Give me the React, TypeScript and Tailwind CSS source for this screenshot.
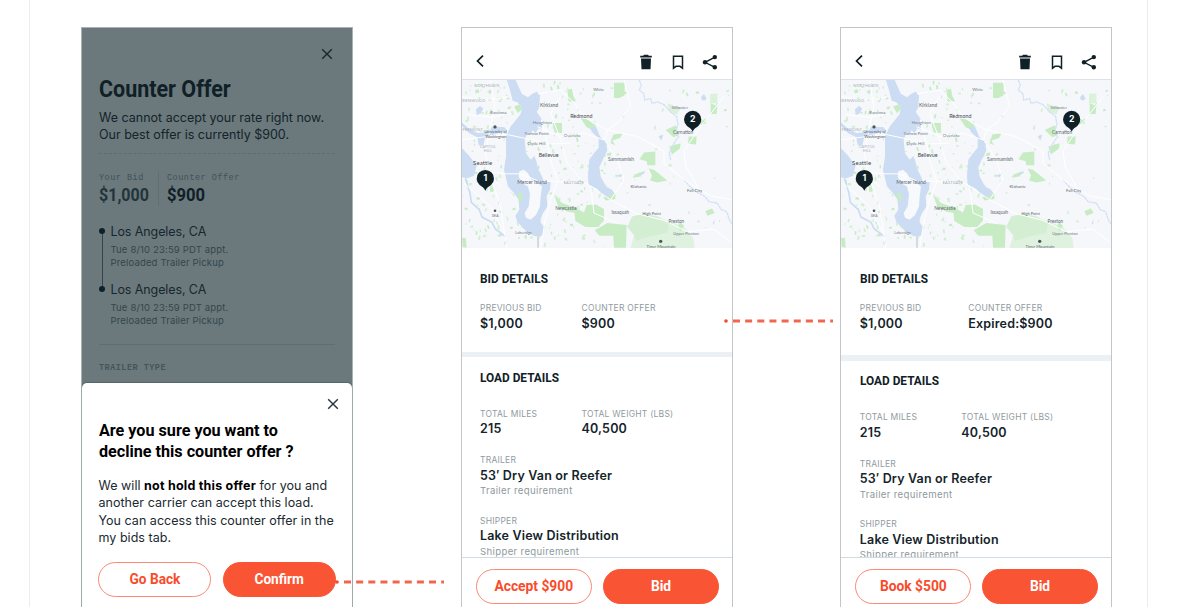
import type { ReactNode } from "react";
import clsx from "clsx";

const INTER = "font-['Inter',sans-serif]";
const MONO = "font-['Liberation_Mono',monospace]";

/* Condensed display face, used for headings and buttons */
function Condensed({
  children,
  className,
}: {
  children: ReactNode;
  className?: string;
}) {
  return (
    <span
      className={clsx(
        "inline-block whitespace-nowrap font-['Roboto',sans-serif] font-bold",
        className,
      )}
    >
      {children}
    </span>
  );
}

function CloseIcon({ className }: { className?: string }) {
  return (
    <svg viewBox="0 0 10 10" className={clsx("size-[10px] overflow-visible", className)}>
      <path d="M0.2 0.2 9.8 9.8M9.8 0.2 0.2 9.8" stroke="currentColor" strokeWidth="1.4" fill="none" />
    </svg>
  );
}

function PillButton({
  children,
  filled,
  className,
}: {
  children: ReactNode;
  filled?: boolean;
  className?: string;
}) {
  return (
    <button
      className={clsx(
        "flex h-[35px] shrink-0 items-center justify-center rounded-full border text-[15px] leading-none",
        filled
          ? "border-[#f95434] bg-[#f95434] text-white"
          : "border-[#fa8a75] bg-white text-[#f94b2b]",
        className,
      )}
    >
      {children}
    </button>
  );
}

const MAP_LABELS: [string, number, number, number, string][] = [
  ["NORTHGATE", 109, 200, 12, "#a9b0b8"],
  ["GREENWOOD", 62, 247, 12, "#a9b0b8"],
  ["FREMONT", 66, 333, 12, "#a9b0b8"],
  ["CAPITOL", 112, 384, 11, "#a9b0b8"],
  ["HILL", 112, 397, 11, "#a9b0b8"],
  ["Ravenna", 143, 281, 13, "#707a82"],
  ["University of", 135, 340, 12, "#4d565e"],
  ["Washington", 135, 354, 12, "#4d565e"],
  ["Kirkland", 295, 260, 15, "#5d666e"],
  ["Houghton", 275, 313, 13, "#7d868e"],
  ["Yarrow Point", 258, 344, 13, "#707a82"],
  ["Clyde Hill", 257, 375, 13, "#707a82"],
  ["Overlake", 365, 350, 13, "#7d868e"],
  ["White", 444, 212, 12, "#707a82"],
  ["Redmond", 392, 295, 16, "#3f484f"],
  ["Bellevue", 294, 413, 16, "#3f484f"],
  ["Mercer Island", 244, 493, 15, "#5d666e"],
  ["EASTGATE", 370, 493, 12, "#a0a8b0"],
  ["Newcastle", 346, 572, 14, "#5d666e"],
  ["Sammamish", 511, 425, 15, "#5d666e"],
  ["Klahanie", 564, 504, 13, "#5d666e"],
  ["Issaquah", 509, 582, 14, "#5d666e"],
  ["High Point", 603, 586, 12, "#5d666e"],
  ["Preston", 677, 611, 14, "#5d666e"],
  ["Upper Preston", 706, 647, 12, "#707a82"],
  ["Tiger Mountain", 631, 686, 13, "#5d666e"],
  ["Stillwater", 687, 266, 12, "#707a82"],
  ["Carnation", 697, 342, 14, "#5d666e"],
  ["Fall City", 732, 517, 13, "#5d666e"],
  ["Lakeridge", 219, 642, 12, "#707a82"],
  ["SEA", 134, 592, 10, "#5d666e"],
];

const PARKS = [
  "490,188 522,188 522,226 506,234 490,234",
  "350,209 364,206 368,228 376,244 354,245",
  "306,309 334,309 334,339 312,338",
  "390,296 412,298 436,318 422,328 408,322",
  "190,260 206,254 216,264 202,280",
  "580,398 614,395 614,436 590,436 588,424 566,418",
  "594,446 610,450 650,482 620,488 598,482 604,468",
  "370,562 400,578 408,556 436,554 460,568 460,602 442,622 404,622 374,604",
  "310,524 334,550 380,566 376,580 350,576 322,558",
  "432,632 470,610 528,616 526,684 490,684 488,648 446,648",
  "476,516 494,520 494,538 466,542 458,534",
  "645,330 676,316 684,346 668,352",
  "714,350 738,350 736,374 712,372",
  "656,380 690,370 688,386 664,404",
  "488,344 516,340 508,354 484,362 494,376 480,370",
  "780,250 800,258 798,282 780,282",
  "750,304 768,294 764,312 748,314",
  "764,574 784,566 792,580 770,588",
  "552,464 578,454 570,470 546,474",
  "688,606 700,618 690,636 682,620",
  "34,654 46,656 48,684 36,682",
  "118,500 128,500 128,516 118,516",
  "74,210 84,208 86,218 74,220",
  "470,400 482,398 480,408 468,408",
];

const ROADS = [
  "M120 180 132 260 120 320 104 400 118 470 150 560 168 684",
  "M34 360 110 350 170 344 226 356 300 372 360 370",
  "M76 452 162 462 208 462 270 486 310 484 406 490 480 540 560 582 640 602 710 636 790 628 844 670",
  "M272 300 290 370 302 430 322 484 300 540 284 600 270 684",
  "M330 230 300 280 330 360 350 430 400 490",
  "M262 222 330 210 372 250 400 292 470 330 560 350 640 394",
  "M470 330 462 360 500 420 520 480 480 540",
  "M640 394 640 430 700 480 780 528 844 540",
  "M520 180 540 260 500 310 470 330",
  "M260 320 330 350 400 340 460 360",
  "M34 230 90 240 170 232M50 284 120 292 176 282",
  "M700 392 706 440 740 500",
  "M820 230 750 320 700 392",
  "M420 500 430 580 500 610",
  "M84 440 150 500M40 490 120 560 160 640",
];

const scatter = (n: number) => {
  const v = Math.sin(n * 127.1 + 11.7) * 43758.5453;
  return v - Math.floor(v);
};

// small parks and yards, denser in the city half
const SPECKS = Array.from({ length: 340 }, (_, i) => {
  const tall = scatter(i + 900) > 0.5;
  const size = 3 + scatter(i + 1700) * 7;
  return {
    x: 36 + scatter(i) * (i % 4 === 0 ? 800 : 430),
    y: 182 + scatter(i + 400) * 498,
    w: tall ? size * 0.6 : size,
    h: tall ? size * 1.3 : size * 0.7,
    r: scatter(i + 2500) * 50 - 25,
  };
});

function RouteMap() {
  return (
    <svg
      viewBox="34 180 810 505"
      preserveAspectRatio="none"
      className="block h-[168px] w-full shrink-0"
      fontFamily="Lato, sans-serif"
    >
      <rect x="34" y="178" width="810" height="507" fill="#f5f7fb" />
      {SPECKS.map((s, i) => (
        <rect
          key={i}
          x={s.x}
          y={s.y}
          width={s.w}
          height={s.h}
          fill={i % 3 ? "#d3efd1" : "#c8ebc6"}
          transform={`rotate(${s.r} ${s.x} ${s.y})`}
        />
      ))}
      <path
        d="M545 590 580 582 620 590 660 606 700 622 728 656 732 685 540 685 550 646 530 622Z"
        fill="#dff1df"
      />
      <path d="M545 590 580 582 620 590 654 612 650 640 600 650 556 664 550 646 530 622Z" fill="#d4eed4" />
      <path d="M778 222 800 220 800 250 778 250Z M650 250 690 264 680 284 656 276Z" fill="#dcf1dc" />
      {PARKS.map((p) => (
        <polygon key={p} points={p} fill="#c7ecc4" />
      ))}

      {/* Water */}
      <g fill="#cbdcf3">
        <path d="M168 178H194L204 200 214 222 232 232 244 222 258 215 268 226 266 262 258 276 272 296 274 330 264 324 254 340 246 330 240 344 232 336 226 348 222 362 226 400 240 420 250 410 256 420 262 446 274 470 280 486 300 486 298 510 288 530 290 560 276 582 268 604 280 624 276 648 252 650 226 634 200 606 194 588 206 570 204 540 190 520 172 500 160 450 166 410 166 350 180 320 196 300 210 282 214 262 200 247 186 242 178 210Z" />
        <path d="M418 324 436 320 448 350 466 368 470 392 456 420 446 442 450 470 466 500 484 510 490 520 470 532 456 526 440 508 414 494 412 470 416 420 430 400 444 384 444 356 424 336Z" />
        <path d="M34 385 54 406 78 436 70 468 50 475 34 472Z" />
        <path d="M76 268 88 258 98 266 90 280 78 286Z" />
        <path d="M34 308 54 326 82 340 104 336 126 320 162 322 168 332 130 344 104 350 98 376 84 376 80 352 56 340 34 318Z" />
        <path d="M752 230 760 222 768 236 760 242 752 238Z M624 350 638 344 632 362Z M562 468 584 452 580 462Z M498 468 518 460 510 472Z M786 610 792 600 790 616Z" />
      </g>
      <path
        d="M44 475 58 520 62 548 86 570 94 592 124 608 134 628 164 650"
        fill="none"
        stroke="#cbdcf3"
        strokeWidth="5"
      />
      <path
        d="M566 180 572 196 566 210 580 222 582 240 600 236 604 250 620 246 640 254 660 276 678 290 682 314 676 330 684 350 668 372 656 400 660 420M700 480 714 496 730 512 762 530 776 546 800 550 812 570 828 576 836 600 844 612"
        fill="none"
        stroke="#d3e0f4"
        strokeWidth="4"
        strokeDasharray="9 1.5"
      />
      <path
        d="M206 454 220 450 232 460 242 478 262 490 274 500 270 530 268 560 256 586 240 600 226 594 222 580 234 560 238 524 232 500 214 490 204 470Z"
        fill="#f7f9fc"
      />
      <path d="M202 518 214 520 216 540 204 548Z" fill="#c7ecc4" />

      {ROADS.map((d) => (
        <path key={d} d={d} fill="none" stroke="#ffffff" strokeWidth="3" />
      ))}
      <path d="M262 648V684" stroke="#d5dae2" strokeWidth="6" />

      {/* Place names */}
      {MAP_LABELS.map(([name, x, y, size, fill]) => (
        <text
          key={name}
          x={x}
          y={y}
          fontSize={size}
          fill={fill}
          textAnchor="middle"
          letterSpacing={name === name.toUpperCase() ? 0.5 : 0}
        >
          {name}
        </text>
      ))}
      <text x="96" y="436" fontSize="18" fill="#3f484f" textAnchor="middle" letterSpacing=".4">
        Seattle
      </text>
      <circle cx="133" cy="321" r="5" fill="#4d565e" />
      <circle cx="133" cy="573" r="4" fill="#4d565e" />
      <circle cx="630" cy="665" r="5" fill="#4d565e" />

      {/* Stops */}
      {[
        { n: "1", x: 104, y: 476 },
        { n: "2", x: 726, y: 298 },
      ].map(({ n, x, y }) => (
        <g key={n} transform={`translate(${x} ${y})`}>
          <path
            d="M0 37C-4 28-10 25-17 20A26 26 0 1 1 17 20C10 25 4 28 0 37Z"
            fill="#0f2026"
          />
          <text y="9" fontSize="26" fontWeight="700" fill="#fff" textAnchor="middle" fontFamily="Inter, sans-serif">
            {n}
          </text>
        </g>
      ))}
    </svg>
  );
}

function Toolbar() {
  return (
    <div className="flex h-[52px] shrink-0 items-start border-b border-[#dde2ea] pr-[15.5px] pl-[14px] text-[#0f2026]">
      <svg viewBox="0 0 8 12" className="mt-[26.5px] h-3 w-2" fill="none" stroke="currentColor" strokeWidth="1.7">
        <path d="M7 0.7 1.5 6 7 11.3" />
      </svg>
      <div className="ml-auto flex gap-[18px] pt-[25.5px]">
        <svg viewBox="0 0 14 16" className="h-4 w-[14px]" fill="currentColor">
          <path d="M1.2 1.8H4.2L5 .7H9L9.8 1.8H12.8V3.5H1.2ZM2 4.4H12L11.5 15.2H2.5Z" />
        </svg>
        <svg viewBox="0 0 14 16" className="h-4 w-[14px]" fill="none" stroke="currentColor" strokeWidth="1.5">
          <path d="M2.5 2.2H11.5V14.2L9 12.3H5L2.5 14.2Z" />
        </svg>
        <svg viewBox="0 0 14 16" className="h-4 w-[14px] overflow-visible" fill="currentColor">
          <path d="M12 3.2 2 8.3 12 13.4" fill="none" stroke="currentColor" strokeWidth="1.3" />
          <circle cx="11.8" cy="3.1" r="2.2" />
          <circle cx="2" cy="8.3" r="2.2" />
          <circle cx="11.8" cy="13.3" r="2.2" />
        </svg>
      </div>
    </div>
  );
}

function Field({
  label,
  value,
  note,
  className,
}: {
  label: string;
  value: string;
  note?: string;
  className?: string;
}) {
  return (
    <div className={clsx("whitespace-nowrap", className)}>
      <div className="text-[8.5px] leading-3 tracking-[0.24px] text-[#8f9b9f]">{label}</div>
      <div className="mt-[1.5px] text-[12.5px] leading-4 font-semibold tracking-[0.17px] text-[#14242a]">
        {value}
      </div>
      {note && (
        <div className="mt-[0.5px] text-[9.6px] leading-[14px] tracking-[0.35px] text-[#8d999d]">
          {note}
        </div>
      )}
    </div>
  );
}

function SectionTitle({ children }: { children: ReactNode }) {
  return (
    <h2 className="h-4 text-[12.8px] leading-4 text-[#0f2026]">
      <Condensed className="origin-left scale-x-[.925]">{children}</Condensed>
    </h2>
  );
}

function BidPhone({
  offer,
  action,
  expired,
}: {
  offer: string;
  action: string;
  expired?: boolean;
}) {
  const inset = expired ? "pl-[18.5px]" : "pl-[18px]";
  return (
    <div
      className={clsx(
        "flex h-[590px] w-[272px] shrink-0 flex-col border border-[#c3c6c8] bg-white",
        INTER,
      )}
    >
      <Toolbar />
      <RouteMap />
      <div className="flex h-[309px] shrink-0 flex-col overflow-hidden">
        <section className={clsx("pt-[23px]", inset)}>
          <SectionTitle>BID DETAILS</SectionTitle>
          <div className="mt-[15px] flex">
            <Field
              label="PREVIOUS BID"
              value="$1,000"
              className={expired ? "w-[108.5px]" : "w-[101.5px]"}
            />
            <Field label="COUNTER OFFER" value={offer} />
          </div>
        </section>
        <div
          className={clsx(
            "h-[5.5px] shrink-0 bg-[#ebf0f4]",
            expired ? "mt-[23.5px]" : "mt-5",
          )}
        />
        <section className={clsx("pt-[12.5px]", inset)}>
          <SectionTitle>LOAD DETAILS</SectionTitle>
          <div className="mt-[22px] flex">
            <Field label="TOTAL MILES" value="215" className="w-[101.5px]" />
            <Field label="TOTAL WEIGHT (LBS)" value="40,500" />
          </div>
          <Field
            className="mt-[17px]"
            label="TRAILER"
            value="53′ Dry Van or Reefer"
            note="Trailer requirement"
          />
          <Field
            className="mt-[16.5px]"
            label="SHIPPER"
            value="Lake View Distribution"
            note="Shipper requirement"
          />
        </section>
      </div>
      <div className="flex grow gap-[11.5px] border-t border-[#d3dbe2] px-[14px] pt-[10.5px]">
        <PillButton className="w-[115.5px]">
          <Condensed className="scale-x-[.92]">{action}</Condensed>
        </PillButton>
        <PillButton filled className="w-[115.5px]">
          <Condensed className="scale-x-[.92]">Bid</Condensed>
        </PillButton>
      </div>
    </div>
  );
}

function Stop({ last }: { last?: boolean }) {
  return (
    <div className="flex h-[58.5px] gap-[5.5px]">
      <div className="flex w-[6px] flex-col items-center pt-[5px]">
        <span className="size-[6px] shrink-0 rounded-full bg-[#0f2026]" />
        {!last && <span className="-mb-[6px] w-px grow bg-[#344449]" />}
      </div>
      <div className="whitespace-nowrap">
        <div className="text-[12.5px] leading-[17px] tracking-[-0.1px] text-[#17272d]">
          Los Angeles, CA
        </div>
        <div className="mt-[3px] text-[9.5px] leading-[13px] tracking-[0.16px] text-[#34454a]">
          <p>Tue 8/10 23:59 PDT appt.</p>
          <p>Preloaded Trailer Pickup</p>
        </div>
      </div>
    </div>
  );
}

function CounterOfferPhone() {
  return (
    <div
      className={clsx(
        "flex h-[590px] w-[272px] shrink-0 flex-col border border-[#a9b2b4] bg-[#6b797d]",
        INTER,
      )}
    >
      <div className="h-[355px] shrink-0 px-[17px] pt-[20.5px]">
        <CloseIcon className="mr-[3.5px] ml-auto text-[#17272d]" />
        <h1 className="mt-4 h-7 text-[24px] leading-7 text-[#0f2026]">
          <Condensed className="origin-left scale-x-[.895]">Counter Offer</Condensed>
        </h1>
        <p className="mt-[6.5px] text-[12.5px] leading-[17px] whitespace-nowrap text-[#13242a]">
          We cannot accept your rate right now.
          <br />
          Our best offer is currently $900.
        </p>
        <div className="mt-[10px] border-t border-dashed border-[#5d6c71]" />

        <div className="mt-[17.5px] flex">
          <div className="w-[60px] border-r border-[#5f6e72]">
            <div className={clsx("text-[8.5px] leading-3 tracking-[0.5px] text-[#415257]", MONO)}>
              Your Bid
            </div>
            <div className="text-[18px] leading-[22px] text-[#23343a]">
              <Condensed className="origin-left scale-x-[.89]">$1,000</Condensed>
            </div>
          </div>
          <div className="pl-2">
            <div className={clsx("text-[8.5px] leading-3 tracking-[0.5px] text-[#415257]", MONO)}>
              Counter Offer
            </div>
            <div className="text-[18px] leading-[22px] text-[#0f2026]">
              <Condensed className="origin-left scale-x-[.92]">$900</Condensed>
            </div>
          </div>
        </div>

        <div className="mt-[17px]">
          <Stop />
          <Stop last />
        </div>
        <div className="mt-[4px] border-t border-[#5f6e72]" />
        <div
          className={clsx("mt-[17px] text-[8.5px] leading-3 font-bold tracking-[0.48px] text-[#45565b]", MONO)}
        >
          TRAILER TYPE
        </div>
      </div>

      {/* Confirmation sheet */}
      <div className="grow rounded-t-[5px] bg-white pt-[15.5px] pl-[16.5px] shadow-[0_-1px_1px_#56666b]">
        <CloseIcon className="mr-[14.5px] ml-auto text-[#24343a]" />
        <h2 className="mt-[11px] h-[43px] text-[17px] leading-[21.5px] text-black">
          <Condensed className="origin-left scale-x-[.95]">
            Are you sure you want to
            <br />
            decline this counter offer ?
          </Condensed>
        </h2>
        <p className="mt-[14.5px] text-[12.5px] leading-[17.3px] tracking-[0.03px] whitespace-nowrap text-[#1b2a30]">
          We will <b className="tracking-[0.22px] text-black">not hold this offer</b> for you and
          <br />
          another carrier can accept this load.
          <br />
          You can access this counter offer in the
          <br />
          my bids tab.
        </p>
        <div className="-ml-[0.5px] mt-4 flex gap-[11.5px]">
          <PillButton className="w-[113px]">
            <Condensed className="scale-x-[.91]">Go Back</Condensed>
          </PillButton>
          <PillButton filled className="w-[113px]">
            <Condensed className="scale-x-[.91]">Confirm</Condensed>
          </PillButton>
        </div>
      </div>
    </div>
  );
}

/* Dashed flow line between two screens */
function Connector({ className }: { className: string }) {
  return (
    <svg viewBox="0 0 112 4" className={clsx("absolute h-1 w-[112px]", className)}>
      <circle cx="2" cy="2" r="1.8" fill="#f4492d" />
      <path d="M9 2H109" stroke="#f1664f" strokeWidth="3" strokeDasharray="7 5.15" fill="none" />
    </svg>
  );
}

export default function App() {
  return (
    <div className="h-[607px] w-[1177px] overflow-hidden bg-white">
      <div className="relative ml-[29px] flex h-full w-[1119px] items-start gap-[108px] border-x border-[#ececec] pt-[27px] pl-[51px]">
        <CounterOfferPhone />
        <BidPhone offer="$900" action="Accept $900" />
        <div className="-ml-[0.7px]">
          <BidPhone offer="Expired:$900" action="Book $500" expired />
        </div>
        <Connector className="top-[580px] left-[304.5px]" />
        <Connector className="top-[318.5px] left-[694px]" />
      </div>
    </div>
  );
}
